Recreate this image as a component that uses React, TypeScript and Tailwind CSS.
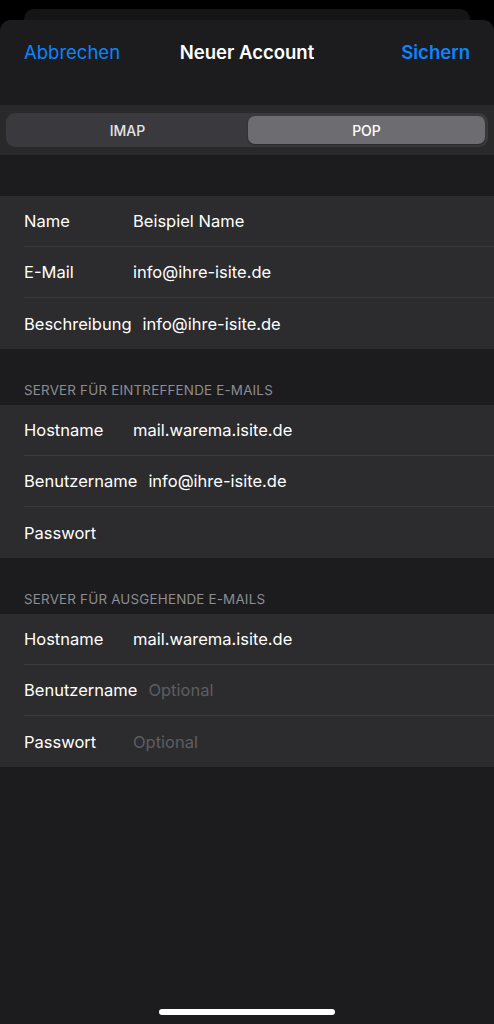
const FONT = "font-['Inter','Noto_Sans',sans-serif]"

type Row = { label: string; value?: string; placeholder?: string }

const ACCOUNT: Row[] = [
  { label: 'Name', value: 'Beispiel Name' },
  { label: 'E-Mail', value: 'info@ihre-isite.de' },
  { label: 'Beschreibung', value: 'info@ihre-isite.de' },
]

const INCOMING: Row[] = [
  { label: 'Hostname', value: 'mail.warema.isite.de' },
  { label: 'Benutzername', value: 'info@ihre-isite.de' },
  { label: 'Passwort' },
]

const OUTGOING: Row[] = [
  { label: 'Hostname', value: 'mail.warema.isite.de' },
  { label: 'Benutzername', placeholder: 'Optional' },
  { label: 'Passwort', placeholder: 'Optional' },
]

function Group({ rows }: { rows: Row[] }) {
  return (
    <div className="bg-[#2c2c2e]">
      {rows.map((row, i) => (
        <div key={row.label} className="pl-6">
          <div
            className={`flex h-[51px] items-center gap-[11px] pt-[1px] ${
              i < rows.length - 1 ? 'border-b border-[#3a3a3c]' : ''
            }`}
          >
            <span className="min-w-[98px] text-[16.5px] text-white">{row.label}</span>
            {row.value && <span className="text-[16.5px] text-white">{row.value}</span>}
            {row.placeholder && (
              <span className="text-[16.5px] text-[#5d5d62]">{row.placeholder}</span>
            )}
          </div>
        </div>
      ))}
    </div>
  )
}

function SectionHeader({ title }: { title: string }) {
  return (
    <div className="flex h-[56px] items-end pb-[5px] pl-6 text-[13.4px] tracking-[0.2px] text-[#8d8d93]">
      {title}
    </div>
  )
}

export default function App() {
  return (
    <div className={`${FONT} flex h-[1024px] w-[494px] flex-col overflow-hidden bg-black`}>
      {/* card peeking behind the sheet */}
      <div className="mx-6 mt-[9px] h-[11px] rounded-t-[10px] bg-[#151516]" />

      <div className="flex flex-1 flex-col rounded-t-[11px] bg-[#1c1c1e]">
        <div className="grid h-[65px] grid-cols-[1fr_auto_1fr] items-center px-6 pt-[1px]">
          <button className="justify-self-start text-[18.5px] text-[#0a84ff]">Abbrechen</button>
          <span className="text-[18.5px] font-semibold text-white">Neuer Account</span>
          <button className="justify-self-end text-[18.5px] font-semibold text-[#0a84ff]">
            Sichern
          </button>
        </div>

        <div className="mt-[20px] bg-[#29292b] px-[6px] py-[8px]">
          <div className="flex h-[34px] rounded-[9px] bg-[#3a3a3e] p-[3px]">
            <div className="flex flex-1 items-center justify-center text-[14px] font-medium text-[#e5e5ea]">
              IMAP
            </div>
            <div className="ml-[2px] flex flex-1 items-center justify-center rounded-[7px] bg-[#6d6d71] text-[14px] font-medium text-white shadow-[0_1px_2px_rgba(0,0,0,0.3)]">
              POP
            </div>
          </div>
        </div>

        <div className="h-[41px]" />
        <Group rows={ACCOUNT} />

        <SectionHeader title="SERVER FÜR EINTREFFENDE E-MAILS" />
        <Group rows={INCOMING} />

        <SectionHeader title="SERVER FÜR AUSGEHENDE E-MAILS" />
        <Group rows={OUTGOING} />

        <div className="flex-1" />
        <div className="mb-[9px] flex justify-center">
          <div className="h-[6px] w-[176px] rounded-full bg-white" />
        </div>
      </div>
    </div>
  )
}
